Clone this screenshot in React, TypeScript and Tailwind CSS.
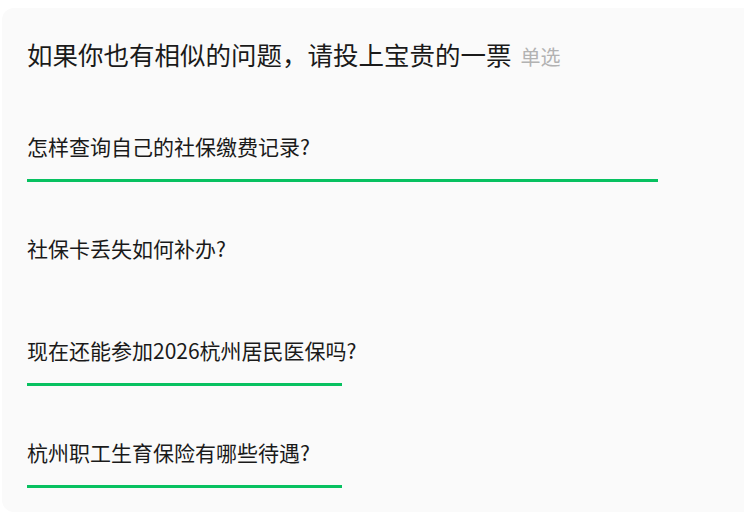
import React from 'react';

interface PollOption {
    label: string;
    barWidth: number; // px, from vote share
}

const options: PollOption[] = [
    { label: '怎样查询自己的社保缴费记录?', barWidth: 631 },
    { label: '社保卡丢失如何补办?', barWidth: 0 },
    { label: '现在还能参加2026杭州居民医保吗?', barWidth: 315 },
    { label: '杭州职工生育保险有哪些待遇?', barWidth: 315 },
];

const OptionRow: React.FC<{ option: PollOption }> = ({ option }) => (
    <div className="flex flex-col">
        <div className="text-[21px] leading-[30px] text-[#1a1a1a]">{option.label}</div>
        <div className="mt-[18px] h-[3px]">
            {option.barWidth > 0 && (
                <div className="h-full bg-[#07c160]" style={{ width: option.barWidth }} />
            )}
        </div>
    </div>
);

export default function App() {
    return (
        <div
            className="w-screen h-[519px] overflow-hidden bg-white pt-[8px] pl-[2px]"
            style={{ fontFamily: '"Microsoft YaHei", "Noto Sans CJK SC", "Noto Sans", sans-serif' }}
        >
            <div className="w-[780px] rounded-[12px] bg-[#fafafa] pl-[25px] pt-[29px] pb-[24px]">
                <div className="flex items-baseline gap-[9px] leading-[34px]">
                    <h1 className="text-[25.5px] text-[#1a1a1a] font-normal">如果你也有相似的问题，请投上宝贵的一票</h1>
                    <span className="text-[20px] text-[#b2b2b2]">单选</span>
                </div>
                <div className="mt-[57px] flex flex-col gap-[51px]">
                    {options.map((o) => (
                        <OptionRow key={o.label} option={o} />
                    ))}
                </div>
            </div>
        </div>
    );
}
